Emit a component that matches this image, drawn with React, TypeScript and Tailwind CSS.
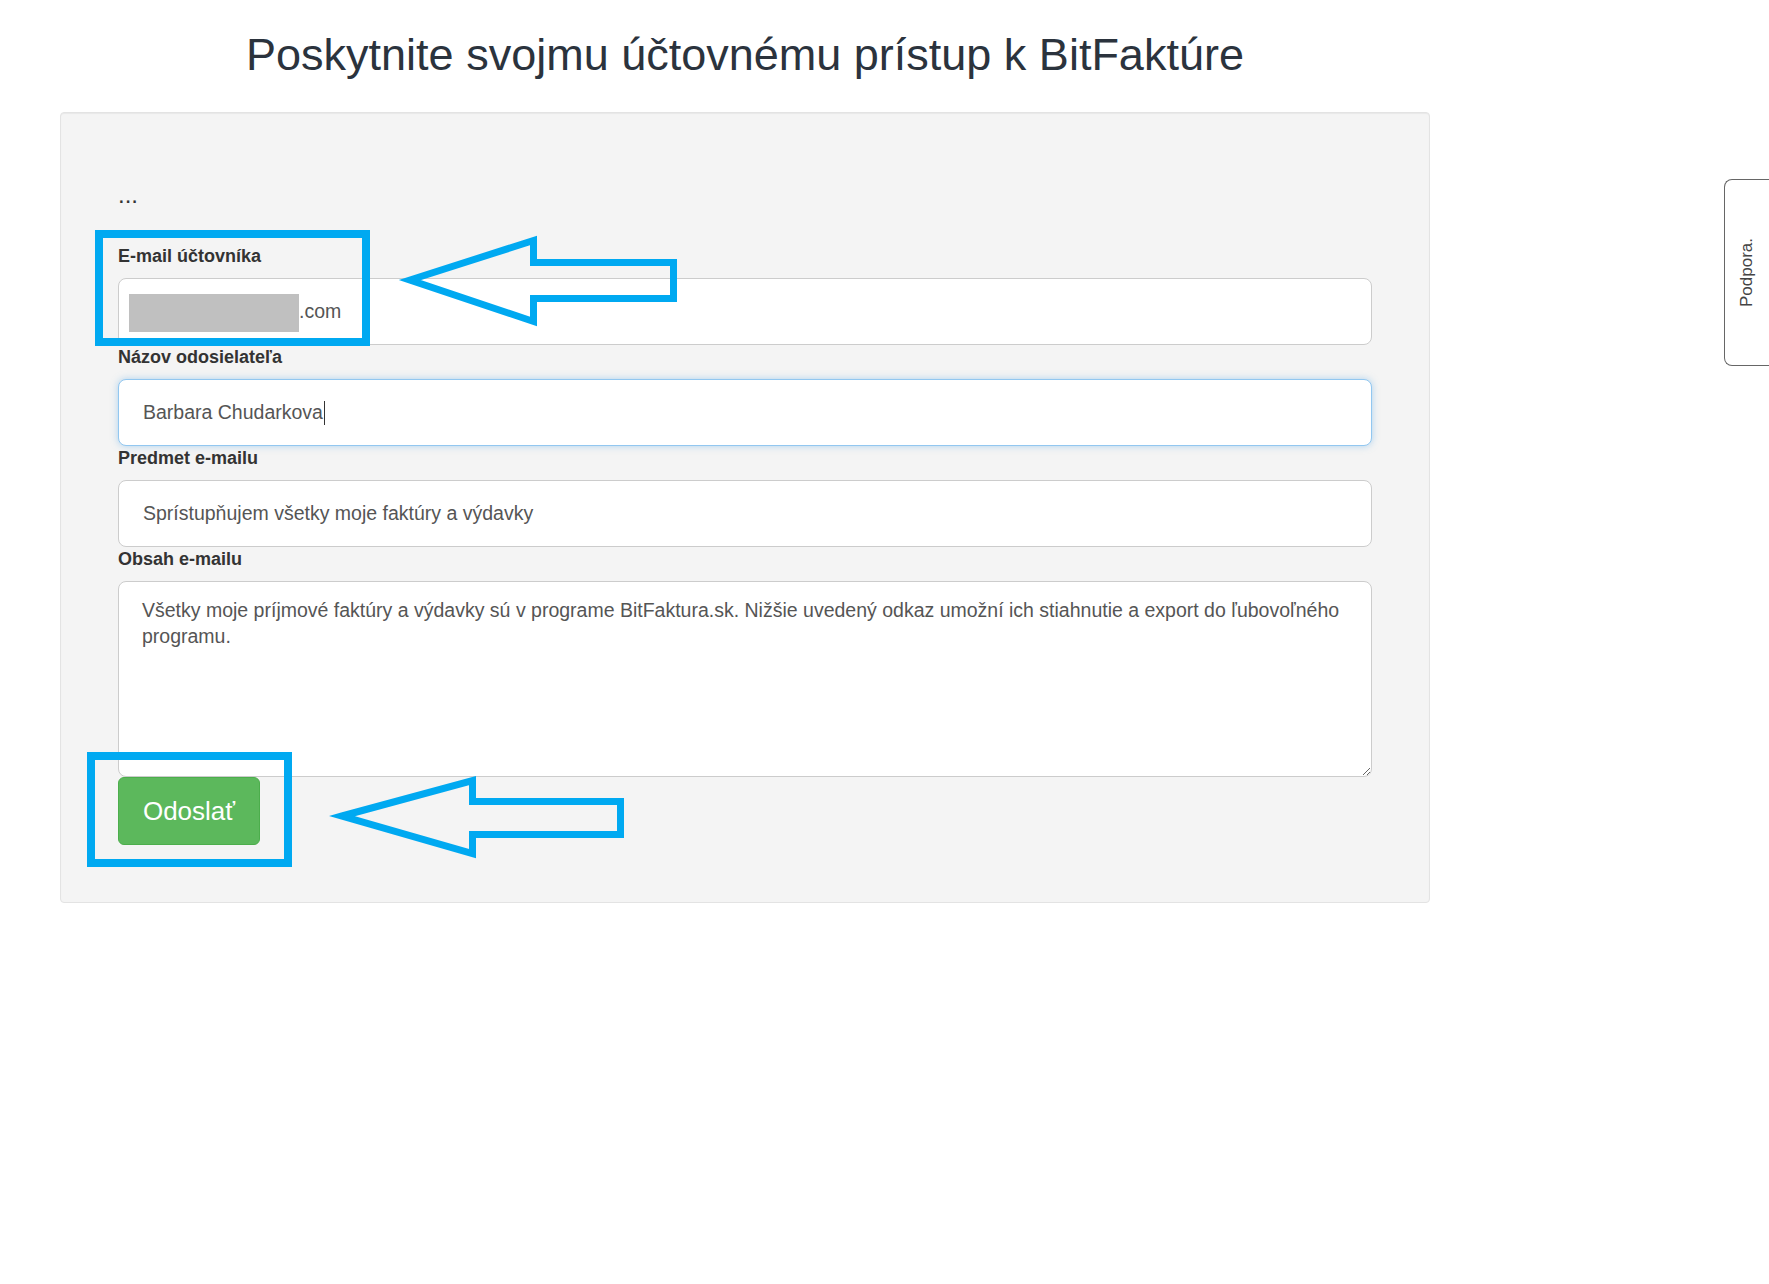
import React from "react";

const labelCls = "block text-[18px] leading-[22px] font-bold text-[#333] mb-[11px]";
const fieldCls =
  "flex items-center h-[67px] w-full bg-white border rounded-[8px] text-[19.5px] text-[#555] mb-[1px] pt-[2px]";

const Annotations = () => (
  <svg
    className="absolute left-0 top-0 pointer-events-none"
    width={1769}
    height={1284}
    viewBox="0 0 1769 1284"
    fill="none"
  >
    {/* highlight boxes */}
    <rect x={99} y={234} width={267} height={108} stroke="#00a9f1" strokeWidth={8} />
    <rect x={91} y={756} width={197} height={107} stroke="#00a9f1" strokeWidth={8} />
    {/* arrows */}
    <polygon
      points="410,280 533.5,240.5 533.5,262.5 673.5,262.5 673.5,298.5 533.5,298.5 533.5,321.5"
      stroke="#00a9f1"
      strokeWidth={7}
      strokeMiterlimit={10}
    />
    <polygon
      points="342,816 472.5,780.5 472.5,801.5 620.5,801.5 620.5,834.5 472.5,834.5 472.5,853.5"
      stroke="#00a9f1"
      strokeWidth={7}
      strokeMiterlimit={10}
    />
  </svg>
);

export default function App() {
  return (
    <div className="relative min-h-[1284px] bg-white font-['Liberation_Sans',Arial,sans-serif]">
      <div className="ml-[60px] w-[1370px]">
        <h1 className="pt-[30px] mb-[32px] text-center text-[45px] leading-[49.5px] font-normal text-[#2b333d]">
          Poskytnite svojmu účtovnému prístup k BitFaktúre
        </h1>

        <div className="bg-[#f4f4f4] border border-[#e3e3e3] rounded-[4px] shadow-[inset_0_1px_1px_rgba(0,0,0,0.05)] px-[57px] pt-[69px] pb-[57px]">
          <p className="text-[24px] leading-[26px] text-[#333]">...</p>

          <div className="mt-[37px]">
            <label className={labelCls}>E-mail účtovníka</label>
            <div className={`${fieldCls} border-[#cccccc] pl-[10px]`}>
              <span className="inline-block w-[170px] h-[38px] bg-[#c0c0c0] mt-[2px]" />
              <span>.com</span>
            </div>

            <label className={labelCls}>Názov odosielateľa</label>
            <div
              className={`${fieldCls} border-[#92c7f0] shadow-[0_0_7px_rgba(102,175,233,0.5)] pl-[24px]`}
            >
              <span>Barbara Chudarkova</span>
              <span className="inline-block w-px h-[24px] bg-[#333] ml-[1px]" />
            </div>

            <label className={labelCls}>Predmet e-mailu</label>
            <div className={`${fieldCls} border-[#cccccc] pl-[24px]`}>
              Sprístupňujem všetky moje faktúry a výdavky
            </div>

            <label className={labelCls}>Obsah e-mailu</label>
            <textarea
              readOnly
              defaultValue="Všetky moje príjmové faktúry a výdavky sú v programe BitFaktura.sk. Nižšie uvedený odkaz umožní ich stiahnutie a export do ľubovoľného programu."
              className="block w-full h-[196px] bg-white border border-[#cccccc] rounded-[8px] pl-[23px] pr-[10px] pt-[15px] text-[19.5px] leading-[26px] text-[#555] resize outline-none font-['Liberation_Sans',Arial,sans-serif]"
            />

            <button
              type="button"
              className="block w-[142px] h-[68px] bg-[#5cb85c] border border-[#4cae4c] rounded-[6px] text-white text-[26px] leading-none"
            >
              Odoslať
            </button>
          </div>
        </div>
      </div>

      {/* support tab on the right edge */}
      <div className="absolute right-0 top-[179px] w-[45px] h-[187px] bg-white border border-r-0 border-[#666] rounded-l-[8px] flex items-center justify-center">
        <span className="[writing-mode:vertical-rl] rotate-180 text-[17px] text-[#444]">
          Podpora.
        </span>
      </div>

      <Annotations />
    </div>
  );
}
